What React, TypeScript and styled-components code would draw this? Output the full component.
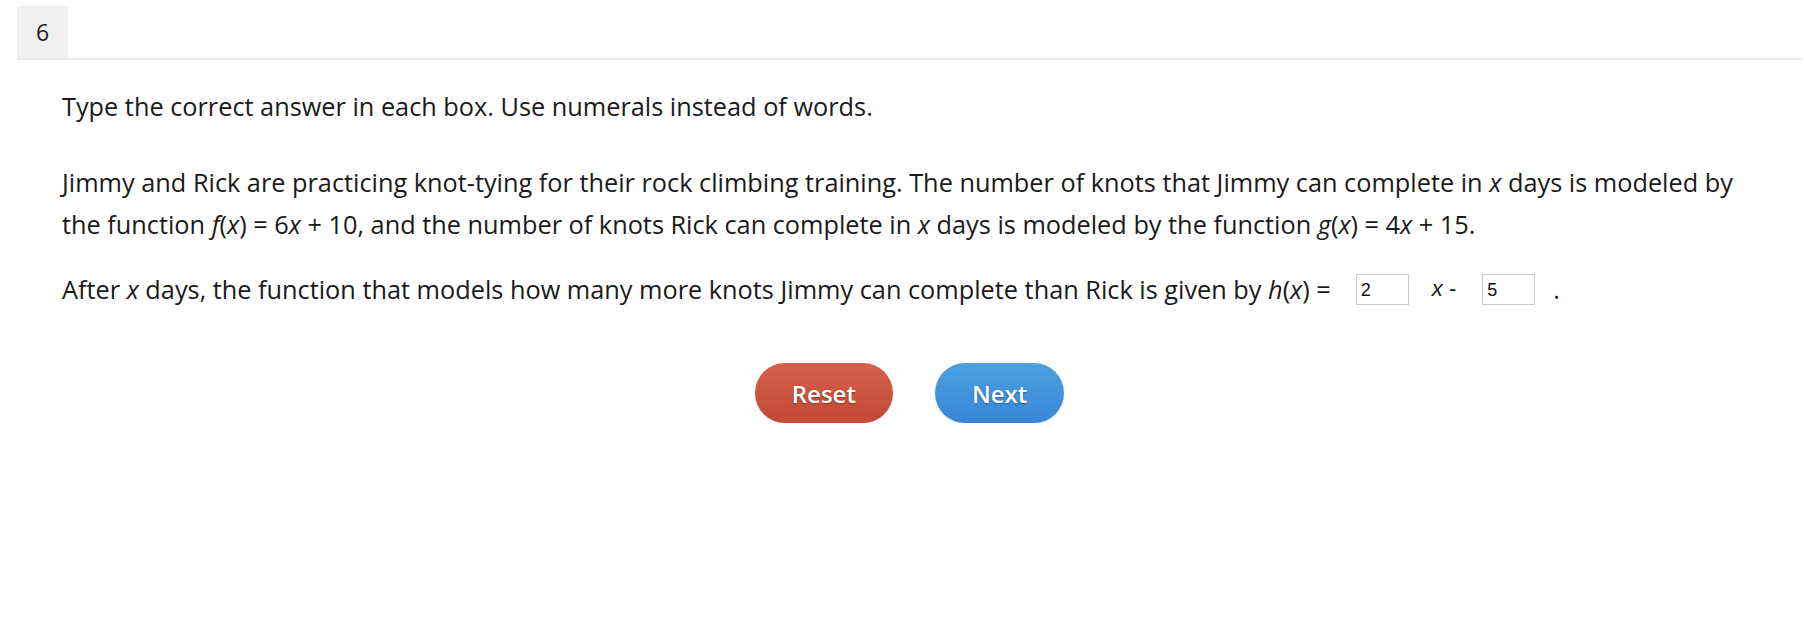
import styled, { createGlobalStyle } from "styled-components";

const GlobalStyle = createGlobalStyle`
  body {
    margin: 0;
    background: #ffffff;
    font-family: "Open Sans", "Liberation Sans", sans-serif;
    color: #1a1a1a;
  }
`;

const Page = styled.div`
  padding: 6px 2px 0 17px;
`;

const Header = styled.div`
  display: flex;
  border-bottom: 2px solid #e8e8e8;
`;

const Tab = styled.div`
  width: 51px;
  height: 52px;
  background: #f0f0f0;
  display: flex;
  align-items: center;
  justify-content: center;
  font-size: 23px;
  color: #222;
`;

const Content = styled.div`
  padding: 25px 0 0 45px;
  font-size: 25.3px;
  line-height: 42px;
`;

const Para = styled.p<{ $gap?: number }>`
  margin: 0 0 ${(p) => p.$gap ?? 0}px 0;
  max-width: 1700px;
`;

const Var = styled.i`
  font-style: italic;
`;

const AnswerRow = styled.p`
  margin: 0;
  display: flex;
  align-items: center;
`;

const Box = styled.input<{ $lead: number }>`
  width: 53px;
  height: 31px;
  box-sizing: border-box;
  border: 1px solid #c8c8c8;
  font-family: "Liberation Sans", Arial, sans-serif;
  font-size: 18px;
  padding: 2px 4px 0;
  margin: 0 0 0 ${(p) => p.$lead}px;
  color: #111;
  outline: none;
`;

const Sym = styled.span`
  font-family: "Liberation Sans", Arial, sans-serif;
  font-size: 22px;
  margin-left: 23px;
`;

const Dot = styled.span`
  margin-left: 18px;
`;

const Buttons = styled.div`
  display: flex;
  justify-content: center;
  gap: 42px;
  margin: 53px 0 0 -45px;
`;

const Btn = styled.button<{ $tone: "red" | "blue" }>`
  height: 60px;
  padding: 0 37px;
  border: none;
  border-radius: 30px;
  font-family: "Open Sans", sans-serif;
  font-size: 24px;
  font-weight: 600;
  color: #fff;
  text-shadow: 0 1px 2px rgba(0, 0, 0, 0.35);
  background: ${(p) =>
    p.$tone === "red"
      ? "linear-gradient(#d4604b, #c24a36)"
      : "linear-gradient(#4ea0e2, #3886d6)"};
  box-shadow: 0 1px 2px rgba(0, 0, 0, 0.15);
  cursor: pointer;
`;

export default function App() {
  return (
    <>
      <GlobalStyle />
      <Page>
        <Header>
          <Tab>6</Tab>
        </Header>
        <Content>
          <Para $gap={34}>Type the correct answer in each box. Use numerals instead of words.</Para>
          <Para $gap={23}>
            Jimmy and Rick are practicing knot-tying for their rock climbing training. The number of
            knots that Jimmy can complete in <Var>x</Var> days is modeled by the function{" "}
            <Var>f</Var>(<Var>x</Var>) = 6<Var>x</Var> + 10, and the number of knots Rick can complete
            in <Var>x</Var> days is modeled by the function <Var>g</Var>(<Var>x</Var>) = 4<Var>x</Var> + 15.
          </Para>
          <AnswerRow>
            After&nbsp;<Var>x</Var>&nbsp;days, the function that models how many more knots Jimmy can
            complete than Rick is given by&nbsp;<Var>h</Var>(<Var>x</Var>) =
            <Box $lead={25} defaultValue="2" />
            <Sym>
              <Var>x</Var> -
            </Sym>
            <Box $lead={26} defaultValue="5" />
            <Dot>.</Dot>
          </AnswerRow>
          <Buttons>
            <Btn $tone="red">Reset</Btn>
            <Btn $tone="blue">Next</Btn>
          </Buttons>
        </Content>
      </Page>
    </>
  );
}
